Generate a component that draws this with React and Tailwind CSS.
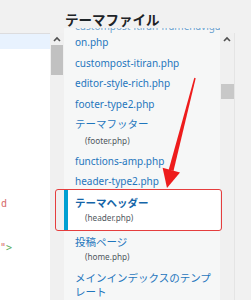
import React from "react";

const Chevron = () => (
  <svg width="8" height="6" viewBox="0 0 8 6">
    <polyline points="1,5 4,2 7,5" fill="none" stroke="#505050" strokeWidth="1.6" />
  </svg>
);

const latin = "font-['Noto_Sans','Noto_Sans_CJK_JP',sans-serif] text-[10px] text-[#1f76bd]";
const jp = "font-['Noto_Sans_CJK_JP',sans-serif] text-[10.5px] text-[#1f76bd]";
const sub = "font-['Noto_Sans',sans-serif] text-[8.2px] text-[#50575e]";

export default function App() {
  return (
    <div className="relative w-[251px] h-[300px] overflow-hidden bg-[#f1f1f1]">
      <div className="h-[28px] pl-[65px] pt-[9px] leading-[20px] text-[13.5px] font-bold text-[#1d2327] font-['Noto_Sans_CJK_JP',sans-serif] whitespace-nowrap">
        テーマファイル
      </div>
      <div className="flex h-[272px]">
        {/* code editor */}
        <div className="w-[50px] mt-[5px] bg-white border-t border-[#dcdcde] font-['DejaVu_Sans_Mono',monospace] text-[10px]">
          <div className="h-[15px] bg-[#e8f2fe]" />
          <div className="mt-[148px] h-[14px] leading-[14px] pl-[1px] text-[#d66a6a]">d</div>
          <div className="mt-[30px] h-[14px] leading-[14px] whitespace-nowrap">
            <span className="text-[#d66a6a]">"</span>
            <span className="text-[#5cae5c]">&gt;</span>
          </div>
        </div>
        {/* left scrollbar */}
        <div className="w-[14px] mt-[5px] bg-[#f0f0f0] flex flex-col items-center">
          <div className="h-[12px] flex items-center justify-center">
            <Chevron />
          </div>
          <div className="w-[12px] h-[30px] bg-[#c1c1c1]" />
        </div>
        {/* file list */}
        <div className="w-[156px] bg-[#f6f7f7] overflow-hidden">
          <div className="-mt-[9px] whitespace-nowrap">
            <div className={`h-[14px] leading-[14px] pl-[11px] ${latin} text-[#6fa3cf]`}>custompost-itiran-framenavigati</div>
            <div className={`mt-[2px] h-[14px] leading-[14px] pl-[11px] ${latin}`}>on.php</div>
            <div className={`mt-[7px] h-[14px] leading-[14px] pl-[11px] ${latin}`}>custompost-itiran.php</div>
            <div className={`mt-[6px] h-[14px] leading-[14px] pl-[11px] ${latin}`}>editor-style-rich.php</div>
            <div className={`mt-[7px] h-[14px] leading-[14px] pl-[11px] ${latin}`}>footer-type2.php</div>
            <div className={`mt-[6px] h-[14px] leading-[14px] pl-[11px] ${jp}`}>テーマフッター</div>
            <div className={`mt-[3px] h-[14px] leading-[14px] pl-[21px] ${sub}`}>(footer.php)</div>
            <div className={`mt-[6px] h-[14px] leading-[14px] pl-[11px] ${latin}`}>functions-amp.php</div>
            <div className={`mt-[6px] h-[14px] leading-[14px] pl-[11px] ${latin}`}>header-type2.php</div>
            <div className="mt-[2px] h-[40px] bg-white border-l-4 border-[#00a0d2] pt-[6px]">
              <div className="h-[14px] leading-[14px] pl-[7px] font-['Noto_Sans_CJK_JP',sans-serif] text-[10.5px] font-bold text-[#1565a8]">
                テーマヘッダー
              </div>
              <div className={`mt-[1px] h-[14px] leading-[14px] pl-[17px] ${sub}`}>(header.php)</div>
            </div>
            <div className={`mt-[5px] h-[14px] leading-[14px] pl-[11px] ${jp}`}>投稿ページ</div>
            <div className={`mt-[1px] h-[14px] leading-[14px] pl-[21px] ${sub}`}>(home.php)</div>
            <div className={`mt-[7px] h-[14px] leading-[14px] pl-[11px] ${jp}`}>メインインデックスのテンプ</div>
            <div className={`h-[14px] leading-[14px] pl-[11px] ${jp}`}>レート</div>
          </div>
        </div>
        {/* list scrollbar */}
        <div className="w-[14px] mt-[5px] bg-[#f0f0f0] flex flex-col items-center">
          <div className="h-[12px] flex items-center justify-center">
            <Chevron />
          </div>
          <div className="mt-[39px] w-[13px] h-[15px] bg-[#c8c8c8]" />
        </div>
        <div className="flex-1 mt-[5px] bg-[#f1f1f1] border-l border-[#e4e4e4]" />
      </div>

      {/* red highlight box */}
      <div className="absolute left-[55px] top-[189px] w-[167px] h-[42px] border-[1.5px] border-[#e53e3e] rounded-[3px]" />

      {/* red arrow */}
      <svg className="absolute left-0 top-0 pointer-events-none" width="251" height="300" viewBox="0 0 251 300">
        <polygon points="194.3,77.8 195.7,78.2 173.5,171 168.7,169.8" fill="#ee1c1c" />
        <polygon points="167,188 162.6,167.8 180,172.4" fill="#ee1c1c" />
      </svg>
    </div>
  );
}
